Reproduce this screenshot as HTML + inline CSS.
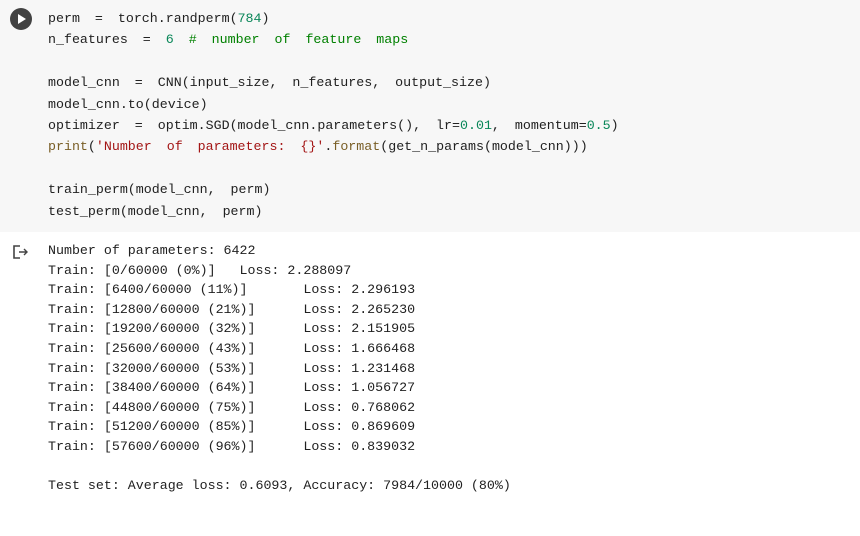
<!DOCTYPE html>
<html><head><style>
body{margin:0;width:860px;height:536px;background:#fff;overflow:hidden;font-family:"Liberation Mono","Noto Sans CJK SC",monospace;}
.cell{position:absolute;left:0;top:0;width:860px;height:232px;background:#f7f7f7;}
.code{position:absolute;left:48px;top:8px;font-size:13.3px;line-height:21.4px;color:#212121;white-space:pre;word-spacing:7px;}
.out{position:absolute;left:48px;top:241px;font-size:13.3px;line-height:19.6px;color:#212121;white-space:pre;}
.n{color:#098658}.c{color:#008000}.s{color:#a31515}.f{color:#795e26}
.play{position:absolute;left:10px;top:8px;width:22px;height:22px;border-radius:50%;background:#424242;}
.play:after{content:"";position:absolute;left:8px;top:6px;border-left:8px solid #fff;border-top:5px solid transparent;border-bottom:5px solid transparent;}
</style></head><body>
<div class="cell"><div class="play"></div>
<div class="code">perm = torch.randperm(<span class="n">784</span>)
n_features = <span class="n">6</span> <span class="c"># number of feature maps</span>

model_cnn = CNN(input_size, n_features, output_size)
model_cnn.to(device)
optimizer = optim.SGD(model_cnn.parameters(), lr=<span class="n">0.01</span>, momentum=<span class="n">0.5</span>)
<span class="f">print</span>(<span class="s">'Number of parameters: {}'</span>.<span class="f">format</span>(get_n_params(model_cnn)))

train_perm(model_cnn, perm)
test_perm(model_cnn, perm)</div></div>
<svg style="position:absolute;left:13px;top:245px" width="18" height="14" viewBox="0 0 18 14"><path d="M7 1H1V13H7" fill="none" stroke="#444" stroke-width="1.6"/><path d="M6 7H14M11 4L14 7L11 10" fill="none" stroke="#444" stroke-width="1.4"/></svg>
<div class="out">Number of parameters: 6422
Train: [0/60000 (0%)]   Loss: 2.288097
Train: [6400/60000 (11%)]       Loss: 2.296193
Train: [12800/60000 (21%)]      Loss: 2.265230
Train: [19200/60000 (32%)]      Loss: 2.151905
Train: [25600/60000 (43%)]      Loss: 1.666468
Train: [32000/60000 (53%)]      Loss: 1.231468
Train: [38400/60000 (64%)]      Loss: 1.056727
Train: [44800/60000 (75%)]      Loss: 0.768062
Train: [51200/60000 (85%)]      Loss: 0.869609
Train: [57600/60000 (96%)]      Loss: 0.839032

Test set: Average loss: 0.6093, Accuracy: 7984/10000 (80%)</div>
</body></html>
